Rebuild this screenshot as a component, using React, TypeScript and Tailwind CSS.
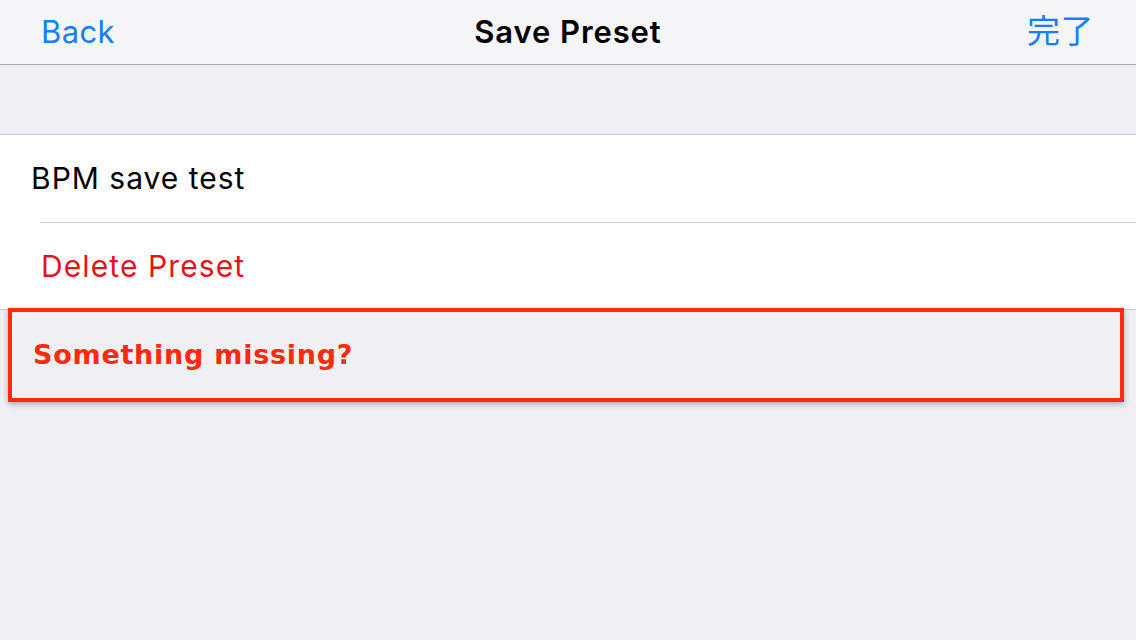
import React from "react";

const sf = "font-['Inter','Noto_Sans_CJK_JP',sans-serif]";

export default function App() {
  return (
    <div className={`w-[1136px] h-[640px] bg-[#efeff4] flex flex-col ${sf}`}>
      {/* nav bar */}
      <div className="h-[65px] bg-[#f6f6f8] border-b border-[#a9a9ac] grid grid-cols-[1fr_auto_1fr] items-center px-[41px]">
        <span className="text-[31px] text-[#147efb] tracking-[0.4px]">Back</span>
        <span className="text-center text-[31px] font-semibold text-black tracking-[0.9px]">Save Preset</span>
        <span className="text-right text-[33px] text-[#147efb] pr-[1px] tracking-[0.5px]">完了</span>
      </div>

      <div className="h-[69px]" />

      {/* table section */}
      <div className="bg-white border-t border-b border-[#c8c7cc]">
        <div className="h-[87px] flex items-center pl-[31px] text-[30px] text-black tracking-[1px]">BPM save test</div>
        <div className="ml-[40px] h-px bg-[#c8c7cc]" />
        <div className="h-[86px] flex items-center pl-[41px] text-[30px] text-[#e3141b] tracking-[1.1px]">Delete Preset</div>
      </div>

      {/* annotation */}
      <div className="relative">
        <div className="absolute left-[8px] top-[-2px] w-[1116px] h-[94px] border-[4px] border-[#ff2a0a] shadow-[0_2px_6px_rgba(0,0,0,0.3)] flex items-center pl-[21px]">
          <span className="font-['DejaVu_Sans',sans-serif] font-bold text-[27px] text-[#ff2a0a] tracking-[0.75px]">
            Something missing?
          </span>
        </div>
      </div>
    </div>
  );
}
